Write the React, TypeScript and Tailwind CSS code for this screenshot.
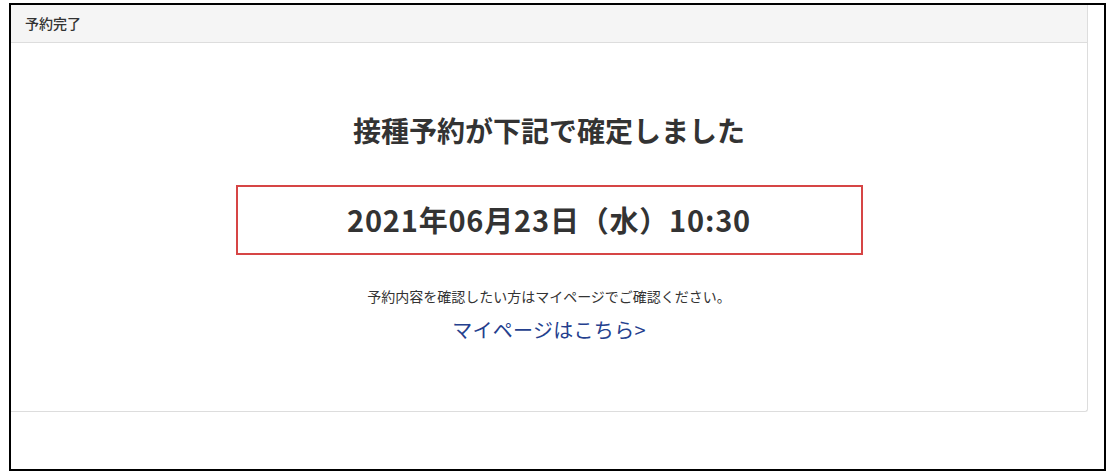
export default function App() {
  return (
    <div
      className="w-[1111px] h-[473px] bg-white pt-[3px] pl-[9px] text-[#333]"
      style={{ fontFamily: '"Noto Sans CJK JP", "Noto Sans", sans-serif' }}
    >
      <div className="w-[1097px] h-[468px] border-2 border-black">
        {/* card */}
        <div className="w-[1077px] h-[407px] border-r border-b border-[#ddd] rounded-br-[3px]">
          <div className="h-[38px] bg-[#f5f5f5] border-b border-[#ddd] flex items-center pl-[14px]">
            <span className="text-[14px] font-medium">予約完了</span>
          </div>
          <div className="flex flex-col items-center">
            <h1 className="mt-[66px] text-[28px] leading-[42px] font-bold">
              接種予約が下記で確定しました
            </h1>
            <div className="mt-[34px] w-[627px] h-[70px] border-2 border-[#d64545] flex items-center justify-center">
              <span className="text-[29px] font-bold tracking-[0.8px]">
                2021年06月23日（水）10:30
              </span>
            </div>
            <p className="mt-[31px] text-[14px] leading-[20px]">
              予約内容を確認したい方はマイページでご確認ください。
            </p>
            <a href="#" className="mt-[10px] text-[20px] leading-[28px] text-[#24408e] tracking-[0.3px]">
              マイページはこちら&gt;
            </a>
          </div>
        </div>
      </div>
    </div>
  );
}
